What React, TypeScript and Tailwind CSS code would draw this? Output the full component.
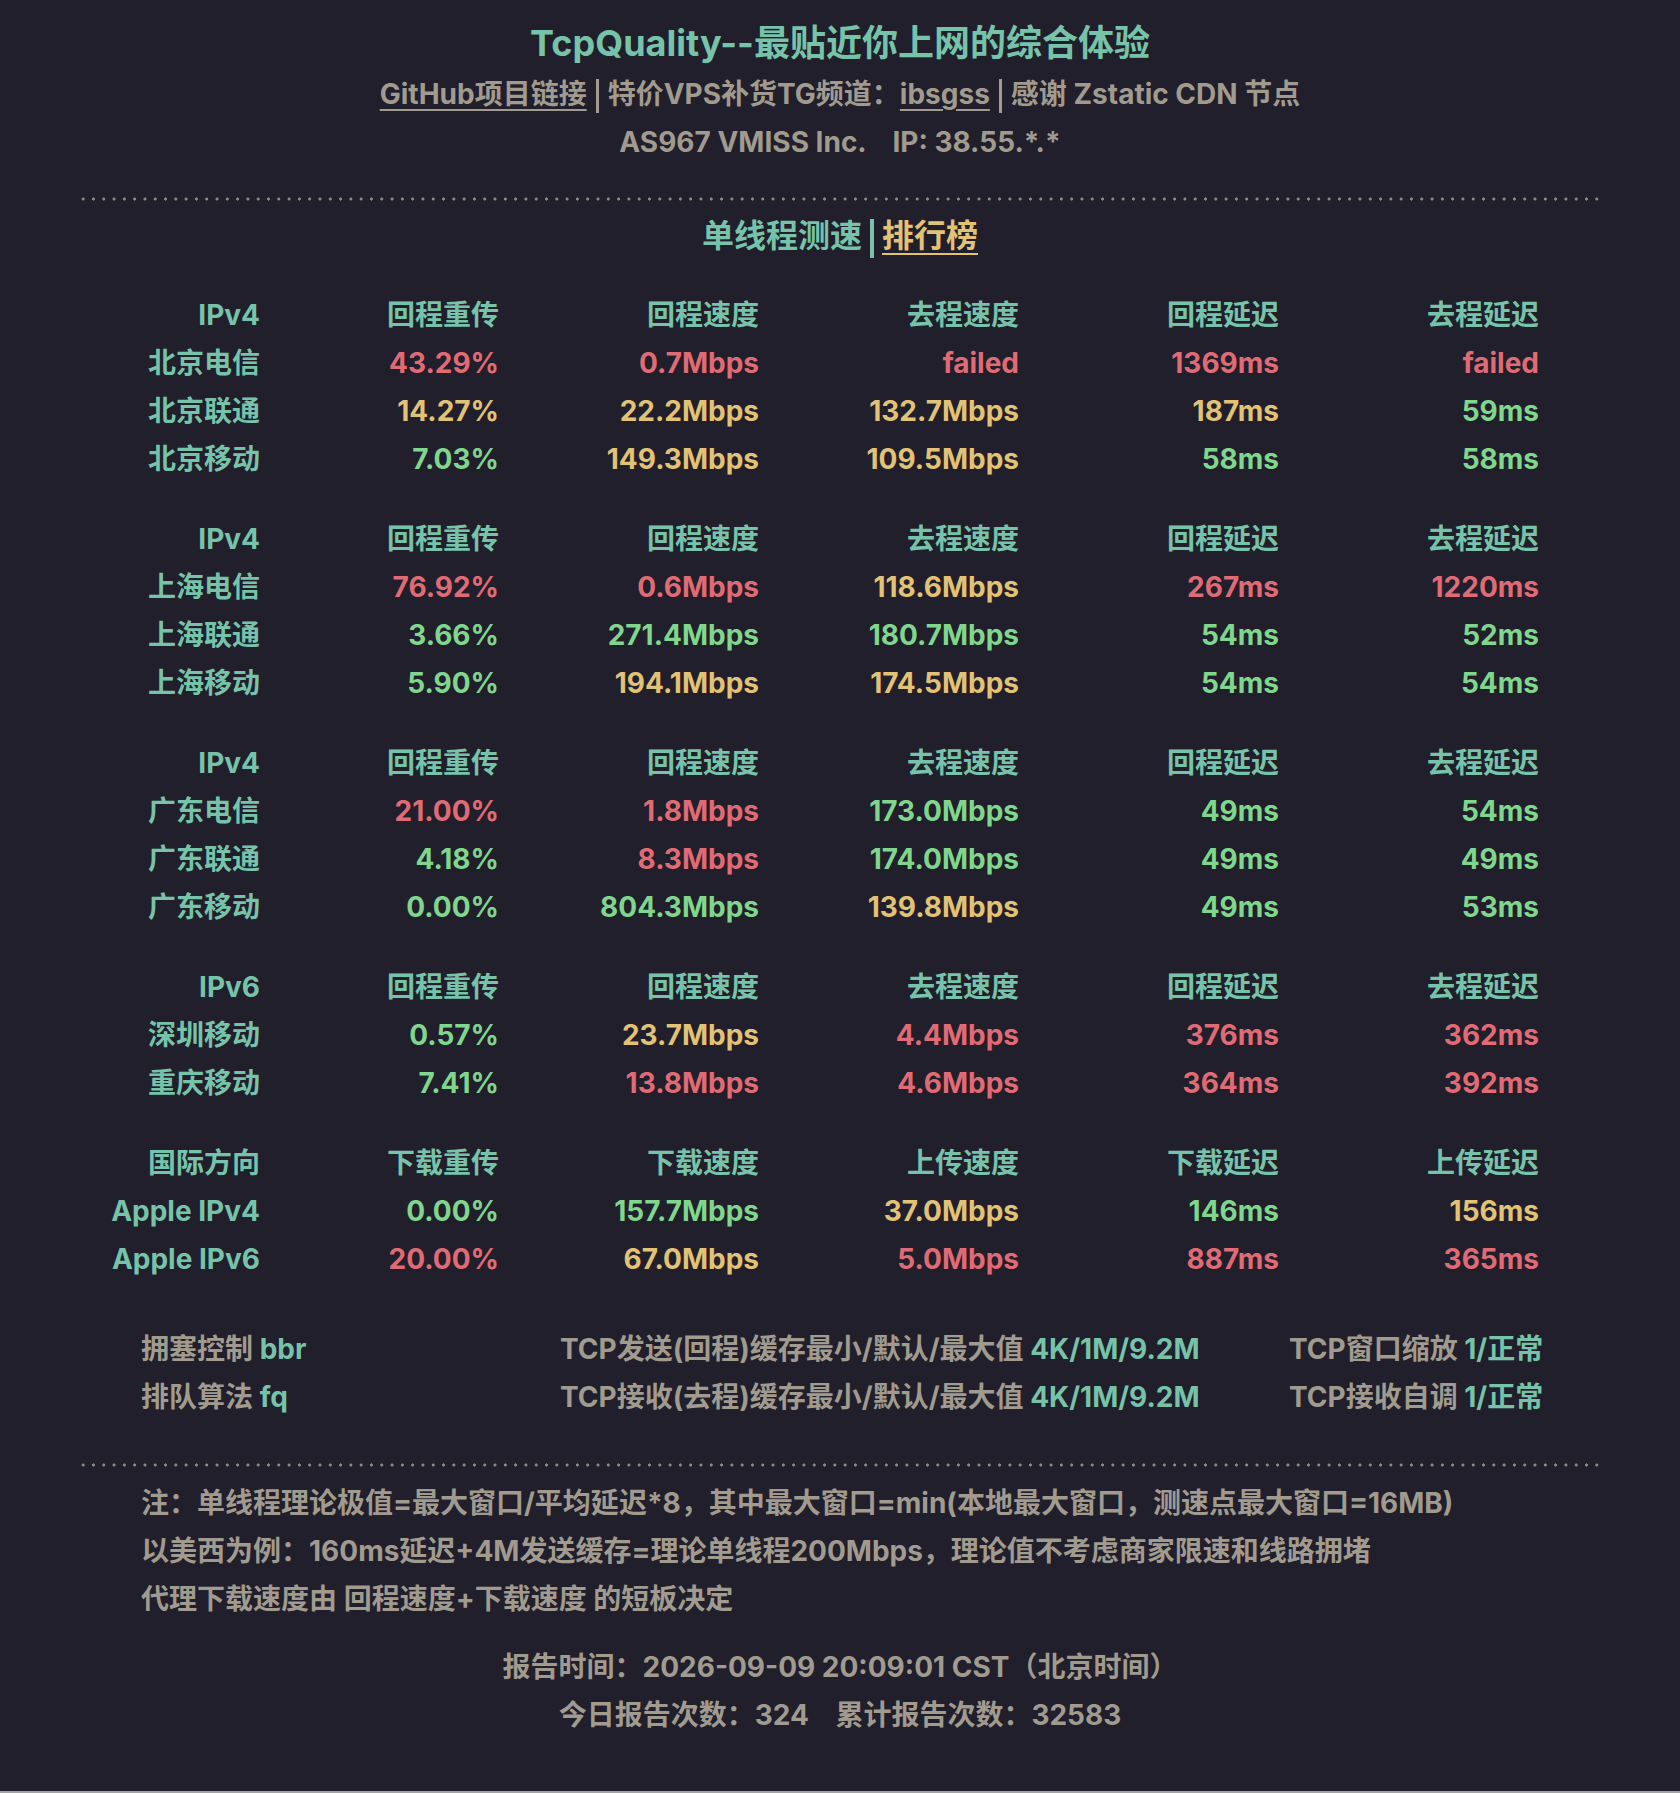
const TEAL = "text-[#76c3aa]";

type Tone = "r" | "y" | "g";

const tone: Record<Tone, string> = {
  r: "text-[#e06b74]",
  y: "text-[#e2c275]",
  g: "text-[#7fd68c]",
};

type Row = { name: string; cells: [string, Tone][] };
type Group = { head: string[]; rows: Row[] };

const groups: Group[] = [
  {
    head: ["IPv4", "回程重传", "回程速度", "去程速度", "回程延迟", "去程延迟"],
    rows: [
      { name: "北京电信", cells: [["43.29%", "r"], ["0.7Mbps", "r"], ["failed", "r"], ["1369ms", "r"], ["failed", "r"]] },
      { name: "北京联通", cells: [["14.27%", "y"], ["22.2Mbps", "y"], ["132.7Mbps", "y"], ["187ms", "y"], ["59ms", "g"]] },
      { name: "北京移动", cells: [["7.03%", "g"], ["149.3Mbps", "y"], ["109.5Mbps", "y"], ["58ms", "g"], ["58ms", "g"]] },
    ],
  },
  {
    head: ["IPv4", "回程重传", "回程速度", "去程速度", "回程延迟", "去程延迟"],
    rows: [
      { name: "上海电信", cells: [["76.92%", "r"], ["0.6Mbps", "r"], ["118.6Mbps", "y"], ["267ms", "r"], ["1220ms", "r"]] },
      { name: "上海联通", cells: [["3.66%", "g"], ["271.4Mbps", "g"], ["180.7Mbps", "g"], ["54ms", "g"], ["52ms", "g"]] },
      { name: "上海移动", cells: [["5.90%", "g"], ["194.1Mbps", "y"], ["174.5Mbps", "y"], ["54ms", "g"], ["54ms", "g"]] },
    ],
  },
  {
    head: ["IPv4", "回程重传", "回程速度", "去程速度", "回程延迟", "去程延迟"],
    rows: [
      { name: "广东电信", cells: [["21.00%", "r"], ["1.8Mbps", "r"], ["173.0Mbps", "g"], ["49ms", "g"], ["54ms", "g"]] },
      { name: "广东联通", cells: [["4.18%", "g"], ["8.3Mbps", "r"], ["174.0Mbps", "g"], ["49ms", "g"], ["49ms", "g"]] },
      { name: "广东移动", cells: [["0.00%", "g"], ["804.3Mbps", "g"], ["139.8Mbps", "y"], ["49ms", "g"], ["53ms", "g"]] },
    ],
  },
  {
    head: ["IPv6", "回程重传", "回程速度", "去程速度", "回程延迟", "去程延迟"],
    rows: [
      { name: "深圳移动", cells: [["0.57%", "g"], ["23.7Mbps", "y"], ["4.4Mbps", "r"], ["376ms", "r"], ["362ms", "r"]] },
      { name: "重庆移动", cells: [["7.41%", "g"], ["13.8Mbps", "r"], ["4.6Mbps", "r"], ["364ms", "r"], ["392ms", "r"]] },
    ],
  },
  {
    head: ["国际方向", "下载重传", "下载速度", "上传速度", "下载延迟", "上传延迟"],
    rows: [
      { name: "Apple IPv4", cells: [["0.00%", "g"], ["157.7Mbps", "g"], ["37.0Mbps", "y"], ["146ms", "g"], ["156ms", "y"]] },
      { name: "Apple IPv6", cells: [["20.00%", "r"], ["67.0Mbps", "y"], ["5.0Mbps", "r"], ["887ms", "r"], ["365ms", "r"]] },
    ],
  },
];

function Dots() {
  return (
    <div className="mx-[78px] h-[4px] bg-[radial-gradient(circle,#8e897d_1.4px,transparent_1.8px)] bg-[length:10.3px_4px] bg-repeat-x" />
  );
}

function Bar() {
  return <span className="inline-block w-[3px] h-[34px] align-middle mx-[9px] bg-[#a19b8f]" />;
}

export default function App() {
  return (
    <div
      className="min-h-[1793px] bg-[#a3a3a3] font-bold"
      style={{ fontFamily: 'Inter, "Noto Sans CJK SC", sans-serif' }}
    >
      <div className="h-[1791px] bg-[#201f2b] text-[#a19b8f] pt-[17px]">
        {/* Header */}
        <h1 className={`text-center text-[36px] leading-[52px] font-bold ${TEAL}`}>
          TcpQuality--最贴近你上网的综合体验
        </h1>
        <div className="text-center text-[28px] leading-[48px] mt-px">
          <span className="underline underline-offset-[5px] decoration-2">GitHub项目链接</span>
          <Bar />
          <span>特价VPS补货TG频道：</span>
          <span className="underline underline-offset-[5px] decoration-2">ibsgss</span>
          <Bar />
          <span>感谢 Zstatic CDN 节点</span>
        </div>
        <div className="text-center text-[28px] leading-[48px] whitespace-pre">
          AS967 VMISS Inc.{"    "}IP: 38.55.*.*
        </div>

        <div className="mt-[31px]">
          <Dots />
        </div>

        <div className="text-center text-[32px] leading-[48px] mt-[11px]">
          <span className={TEAL}>单线程测速</span>
          <span className="inline-block w-[4px] h-[39px] align-middle mx-[8px] bg-[#76c3aa]" />
          <span className="text-[#e2c275] underline underline-offset-[6px] decoration-2">排行榜</span>
        </div>

        {/* Speed table */}
        <div className="mt-[31px] ml-[78px] flex flex-col gap-[32px] text-[28px] leading-[48px]">
          {groups.map((g, gi) => (
            <div key={gi} className="grid grid-cols-[182px_239px_260px_260px_260px_260px] text-right">
              {g.head.map((h) => (
                <div key={h} className={TEAL}>
                  {h}
                </div>
              ))}
              {g.rows.map((r) => (
                <div key={r.name} className="contents">
                  <div className={TEAL}>{r.name}</div>
                  {r.cells.map(([v, t], i) => (
                    <div key={i} className={tone[t]}>
                      {v}
                    </div>
                  ))}
                </div>
              ))}
            </div>
          ))}
        </div>

        {/* Kernel settings */}
        <div className="mt-[42px] ml-[141px] grid grid-cols-[419px_729px_auto] text-[28px] leading-[48px]">
          <div>
            拥塞控制 <span className={TEAL}>bbr</span>
          </div>
          <div>
            TCP发送(回程)缓存最小/默认/最大值 <span className={TEAL}>4K/1M/9.2M</span>
          </div>
          <div>
            TCP窗口缩放 <span className={TEAL}>1/正常</span>
          </div>
          <div>
            排队算法 <span className={TEAL}>fq</span>
          </div>
          <div>
            TCP接收(去程)缓存最小/默认/最大值 <span className={TEAL}>4K/1M/9.2M</span>
          </div>
          <div>
            TCP接收自调 <span className={TEAL}>1/正常</span>
          </div>
        </div>

        <div className="mt-[42px]">
          <Dots />
        </div>

        {/* Notes */}
        <div className="mt-[12px] pl-[141px] text-[28px] leading-[48px]">
          <p>注：单线程理论极值=最大窗口/平均延迟*8，其中最大窗口=min(本地最大窗口，测速点最大窗口=16MB)</p>
          <p>以美西为例：160ms延迟+4M发送缓存=理论单线程200Mbps，理论值不考虑商家限速和线路拥堵</p>
          <p>代理下载速度由 回程速度+下载速度 的短板决定</p>
        </div>

        <div className="mt-[20px] text-center text-[28px] leading-[48px]">
          <p>报告时间：2026-09-09 20:09:01 CST（北京时间）</p>
          <p className="whitespace-pre">今日报告次数：324{"    "}累计报告次数：32583</p>
        </div>
      </div>
    </div>
  );
}
